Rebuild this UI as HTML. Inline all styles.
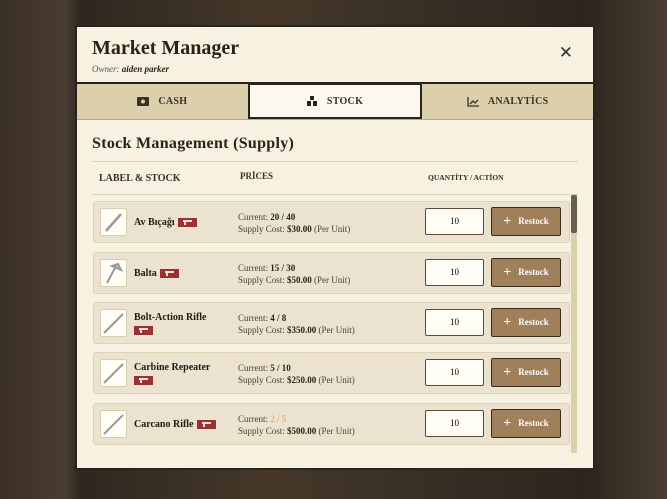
<!DOCTYPE html>
<html><head><meta charset="utf-8"><style>
*{box-sizing:border-box;margin:0;padding:0}
body{width:667px;height:499px;overflow:hidden;background:linear-gradient(90deg,#3a2f26 0,#4a3d31 10%,#2f2720 12%,#453829 40%,#3a3026 60%,#2d251e 88%,#4a3e31 100%);font-family:"Liberation Serif",serif;position:relative}
.m{position:absolute;left:75px;top:25px;width:520px;height:445px;background:#f6f1e1;border:2px solid #2a231b}
.h{height:57px;padding:10px 15px;position:relative;border-bottom:2px solid #2a231b}
.h h1{font-size:20px;font-weight:bold;color:#2a2218;letter-spacing:0}
.h p{font-size:9px;font-style:italic;color:#555;margin-top:4px}.h p b{color:#2a2218}
.x{position:absolute;right:20px;top:16px;font-size:17px;color:#333;font-family:"DejaVu Sans",sans-serif}
.tabs{display:flex;height:36px;background:#dccfac;border-bottom:1px solid #b9aa85}
.t{flex:1;display:flex;align-items:center;justify-content:center;font-size:10px;font-weight:bold;color:#3a3026;gap:9px;letter-spacing:.3px}
.t.a{background:#fbf8ee;border:2px solid #2a231b;margin-top:-1px}
.c{padding:0 15px}
h2{font-size:16px;font-weight:bold;color:#2a2218;margin-top:15px;padding-bottom:8px;border-bottom:1px solid #ddd2b4;letter-spacing:.3px}
.th{display:flex;height:33px;align-items:center;font-size:9px;font-weight:bold;color:#3a3026;border-bottom:1px solid #ddd2b4}
.row{position:absolute;left:16px;width:477px;height:42px;background:#ebe3cf;border:1px solid #ddd2b4;border-radius:3px}
.ic{position:absolute;left:6px;top:6px;width:27px;height:28px;background:#fffdf5;border:1px solid #d8ccb0;border-radius:2px}
.nm{position:absolute;left:40px;font-size:10px;font-weight:bold;color:#1f1a14}
.tag{display:inline-block;width:19px;height:9px;background:#9a3232;vertical-align:middle;margin-left:3px;position:relative}
.tag:after{content:"";position:absolute;left:5px;top:2px;width:9px;height:2px;background:#f0e0e0;box-shadow:0 2px 0 -0px transparent}
.tag:before{content:"";position:absolute;left:6px;top:3px;width:2px;height:4px;background:#f0e0e0}
.pr{position:absolute;left:144px;top:9px;font-size:9px;color:#4a4036;line-height:12px}
.pr b{color:#2a2218}
.q{position:absolute;left:331px;top:6px;width:59px;height:27px;background:#fffdf5;border:1px solid #5a4a3a;border-radius:2px;font-size:9px;text-align:center;line-height:25px}
.b{position:absolute;left:397px;top:5px;width:70px;height:29px;background:#a0805a;border:1px solid #3a2c1e;border-radius:2px;color:#fff;font-size:9px;font-weight:bold;text-align:center;line-height:27px}
.b span{font-size:14px;margin-right:7px;vertical-align:-1px}
.sb{position:absolute;left:494px;top:168px;width:6px;height:258px;background:#dccfac}
.sb i{display:block;height:38px;background:#6b5c4b;border-radius:2px}
</style></head><body>
<div class="m">
<div class="h"><h1>Market Manager</h1><p>Owner: <b>aiden parker</b></p><div class="x">✕</div></div>
<div class="tabs">
<div class="t"><svg width="12" height="9"><rect x="0" y="0" width="12" height="9" rx="1" fill="#3a3026"/><circle cx="6" cy="4.5" r="2" fill="#dccfac"/></svg>CASH</div>
<div class="t a"><svg width="11" height="10"><rect x="3" y="0" width="4" height="4" fill="#2a231b"/><rect x="0" y="5" width="4" height="5" fill="#2a231b"/><rect x="6" y="5" width="4" height="5" fill="#2a231b"/></svg>STOCK</div>
<div class="t"><svg width="12" height="10"><path d="M1 0V9H12M3 7L6 4L8 6L11 3" stroke="#3a3026" stroke-width="1.3" fill="none"/></svg>ANALYTİCS</div>
</div>
<div class="c">
<h2>Stock Management (Supply)</h2>
<div class="th"><div style="width:148px;padding-left:7px;font-size:10px">LABEL &amp; STOCK</div><div style="width:188px;margin-top:-4px">PRİCES</div><div style="font-size:7.5px;margin-top:-2px">QUANTİTY / ACTİON</div></div>
</div>
<div class="row" style="top:174px"><div class="ic"><svg width="25" height="26"><path d="M5 22L20 5" stroke="#999" stroke-width="2.5"/></svg></div><div class="nm" style="top:15px">Av Bıçağı<span class="tag"></span></div><div class="pr">Current: <b>20 / 40</b><br>Supply Cost: <b>$30.00</b> (Per Unit)</div><div class="q">10</div><div class="b"><span>+</span>Restock</div></div>
<div class="row" style="top:225px"><div class="ic"><svg width="25" height="26"><path d="M6 23L15 6M11 6L20 10L17 4Z" stroke="#999" stroke-width="2" fill="#ccc"/></svg></div><div class="nm" style="top:15px">Balta<span class="tag"></span></div><div class="pr">Current: <b>15 / 30</b><br>Supply Cost: <b>$50.00</b> (Per Unit)</div><div class="q">10</div><div class="b"><span>+</span>Restock</div></div>
<div class="row" style="top:275px"><div class="ic"><svg width="25" height="26"><path d="M3 23L22 4" stroke="#999" stroke-width="2"/></svg></div><div class="nm" style="top:9px">Bolt-Action Rifle<br><span class="tag" style="margin:3px 0 0"></span></div><div class="pr">Current: <b>4 / 8</b><br>Supply Cost: <b>$350.00</b> (Per Unit)</div><div class="q">10</div><div class="b"><span>+</span>Restock</div></div>
<div class="row" style="top:325px"><div class="ic"><svg width="25" height="26"><path d="M3 23L22 4" stroke="#999" stroke-width="2"/></svg></div><div class="nm" style="top:9px">Carbine Repeater<br><span class="tag" style="margin:3px 0 0"></span></div><div class="pr">Current: <b>5 / 10</b><br>Supply Cost: <b>$250.00</b> (Per Unit)</div><div class="q">10</div><div class="b"><span>+</span>Restock</div></div>
<div class="row" style="top:376px"><div class="ic"><svg width="25" height="26"><path d="M3 23L22 4" stroke="#999" stroke-width="2"/></svg></div><div class="nm" style="top:15px">Carcano Rifle<span class="tag"></span></div><div class="pr">Current: <b style="color:#e0a030;font-weight:normal">2 / 5</b><br>Supply Cost: <b>$500.00</b> (Per Unit)</div><div class="q">10</div><div class="b"><span>+</span>Restock</div></div>
<div class="sb"><i></i></div>
</div>
</body></html>
